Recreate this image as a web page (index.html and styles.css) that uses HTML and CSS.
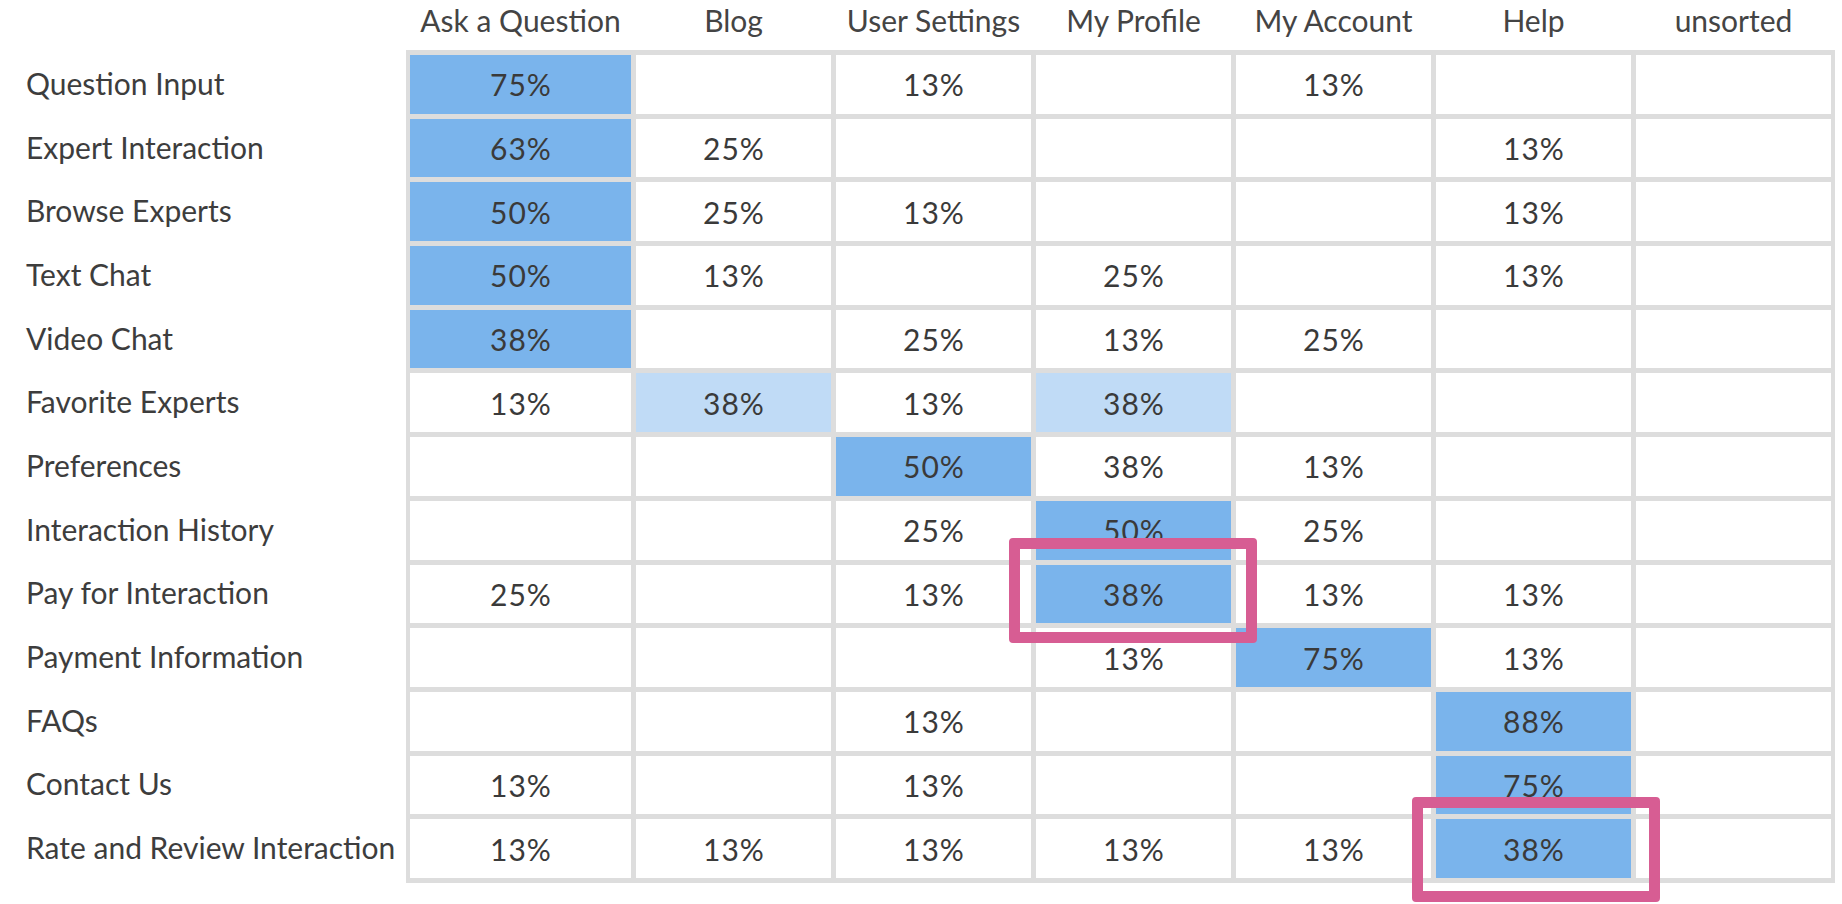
FILE: index.html
```html
<!DOCTYPE html>
<html>
<head>
<meta charset="utf-8">
<link rel="stylesheet" href="styles.css">
</head>
<body>
<div class="chart">
  <div class="head">
    <div class="spacer"></div>
    <div class="hcell">Ask a Question</div>
    <div class="hcell">Blog</div>
    <div class="hcell">User Settings</div>
    <div class="hcell">My Profile</div>
    <div class="hcell">My Account</div>
    <div class="hcell">Help</div>
    <div class="hcell">unsorted</div>
  </div>
  <div class="body">
    <div class="labels">
      <div class="label">Question Input</div>
      <div class="label">Expert Interaction</div>
      <div class="label">Browse Experts</div>
      <div class="label">Text Chat</div>
      <div class="label">Video Chat</div>
      <div class="label">Favorite Experts</div>
      <div class="label">Preferences</div>
      <div class="label">Interaction History</div>
      <div class="label">Pay for Interaction</div>
      <div class="label">Payment Information</div>
      <div class="label">FAQs</div>
      <div class="label">Contact Us</div>
      <div class="label">Rate and Review Interaction</div>
    </div>
    <div class="grid">
      <div class="cell hi">75%</div><div class="cell"></div><div class="cell">13%</div><div class="cell"></div><div class="cell">13%</div><div class="cell"></div><div class="cell"></div>
      <div class="cell hi">63%</div><div class="cell">25%</div><div class="cell"></div><div class="cell"></div><div class="cell"></div><div class="cell">13%</div><div class="cell"></div>
      <div class="cell hi">50%</div><div class="cell">25%</div><div class="cell">13%</div><div class="cell"></div><div class="cell"></div><div class="cell">13%</div><div class="cell"></div>
      <div class="cell hi">50%</div><div class="cell">13%</div><div class="cell"></div><div class="cell">25%</div><div class="cell"></div><div class="cell">13%</div><div class="cell"></div>
      <div class="cell hi">38%</div><div class="cell"></div><div class="cell">25%</div><div class="cell">13%</div><div class="cell">25%</div><div class="cell"></div><div class="cell"></div>
      <div class="cell">13%</div><div class="cell lo">38%</div><div class="cell">13%</div><div class="cell lo">38%</div><div class="cell"></div><div class="cell"></div><div class="cell"></div>
      <div class="cell"></div><div class="cell"></div><div class="cell hi">50%</div><div class="cell">38%</div><div class="cell">13%</div><div class="cell"></div><div class="cell"></div>
      <div class="cell"></div><div class="cell"></div><div class="cell">25%</div><div class="cell hi">50%</div><div class="cell">25%</div><div class="cell"></div><div class="cell"></div>
      <div class="cell">25%</div><div class="cell"></div><div class="cell">13%</div><div class="cell hi">38%</div><div class="cell">13%</div><div class="cell">13%</div><div class="cell"></div>
      <div class="cell"></div><div class="cell"></div><div class="cell"></div><div class="cell">13%</div><div class="cell hi">75%</div><div class="cell">13%</div><div class="cell"></div>
      <div class="cell"></div><div class="cell"></div><div class="cell">13%</div><div class="cell"></div><div class="cell"></div><div class="cell hi">88%</div><div class="cell"></div>
      <div class="cell">13%</div><div class="cell"></div><div class="cell">13%</div><div class="cell"></div><div class="cell"></div><div class="cell hi">75%</div><div class="cell"></div>
      <div class="cell">13%</div><div class="cell">13%</div><div class="cell">13%</div><div class="cell">13%</div><div class="cell">13%</div><div class="cell hi">38%</div><div class="cell"></div>
      <div class="mark mark-a"></div>
      <div class="mark mark-b"></div>
    </div>
  </div>
</div>
</body>
</html>
```

FILE: styles.css
```css
html, body {
  margin: 0;
  padding: 0;
  background: #ffffff;
}

body {
  font-family: "Lato", "Open Sans", "Liberation Sans", sans-serif;
  color: #3a3a3a;
  width: 1842px;
  height: 904px;
  overflow: hidden;
}

.chart {
  display: flex;
  flex-direction: column;
}

.head {
  display: grid;
  grid-template-columns: 405px 221px repeat(6, 195px);
  column-gap: 5px;
  height: 50px;
  align-items: start;
}

.hcell {
  text-align: center;
  font-size: 30px;
  line-height: 36px;
  padding-top: 2px;
  color: #444444;
  white-space: nowrap;
}

.body {
  display: flex;
}

.labels {
  width: 406px;
  box-sizing: border-box;
  padding: 5px 0 5px 26px;
  display: grid;
  grid-template-rows: repeat(13, 58.7px);
  row-gap: 5px;
}

.label {
  display: flex;
  align-items: center;
  font-size: 30px;
  white-space: nowrap;
  color: #3d3d3d;
  padding-bottom: 3px;
}

.grid {
  position: relative;
  width: 1429px;
  box-sizing: border-box;
  background: #dddddd;
  padding: 5px 4px;
  display: grid;
  grid-template-columns: 221px repeat(6, 195px);
  grid-template-rows: repeat(13, 58.7px);
  column-gap: 5px;
  row-gap: 5px;
}

.cell {
  background: #ffffff;
  display: flex;
  align-items: center;
  justify-content: center;
  font-size: 30px;
  letter-spacing: 1px;
  padding-left: 1px;
  color: #3a3a3a;
}

.cell.hi {
  background: #7ab4ec;
}

.cell.lo {
  background: #c0dbf6;
}

.mark {
  position: absolute;
  box-sizing: border-box;
  width: 248px;
  height: 105px;
  border: 11px solid #d75d93;
  border-radius: 4px;
}

.mark-a {
  left: 603px;
  top: 488px;
}

.mark-b {
  left: 1006px;
  top: 747px;
}
```
